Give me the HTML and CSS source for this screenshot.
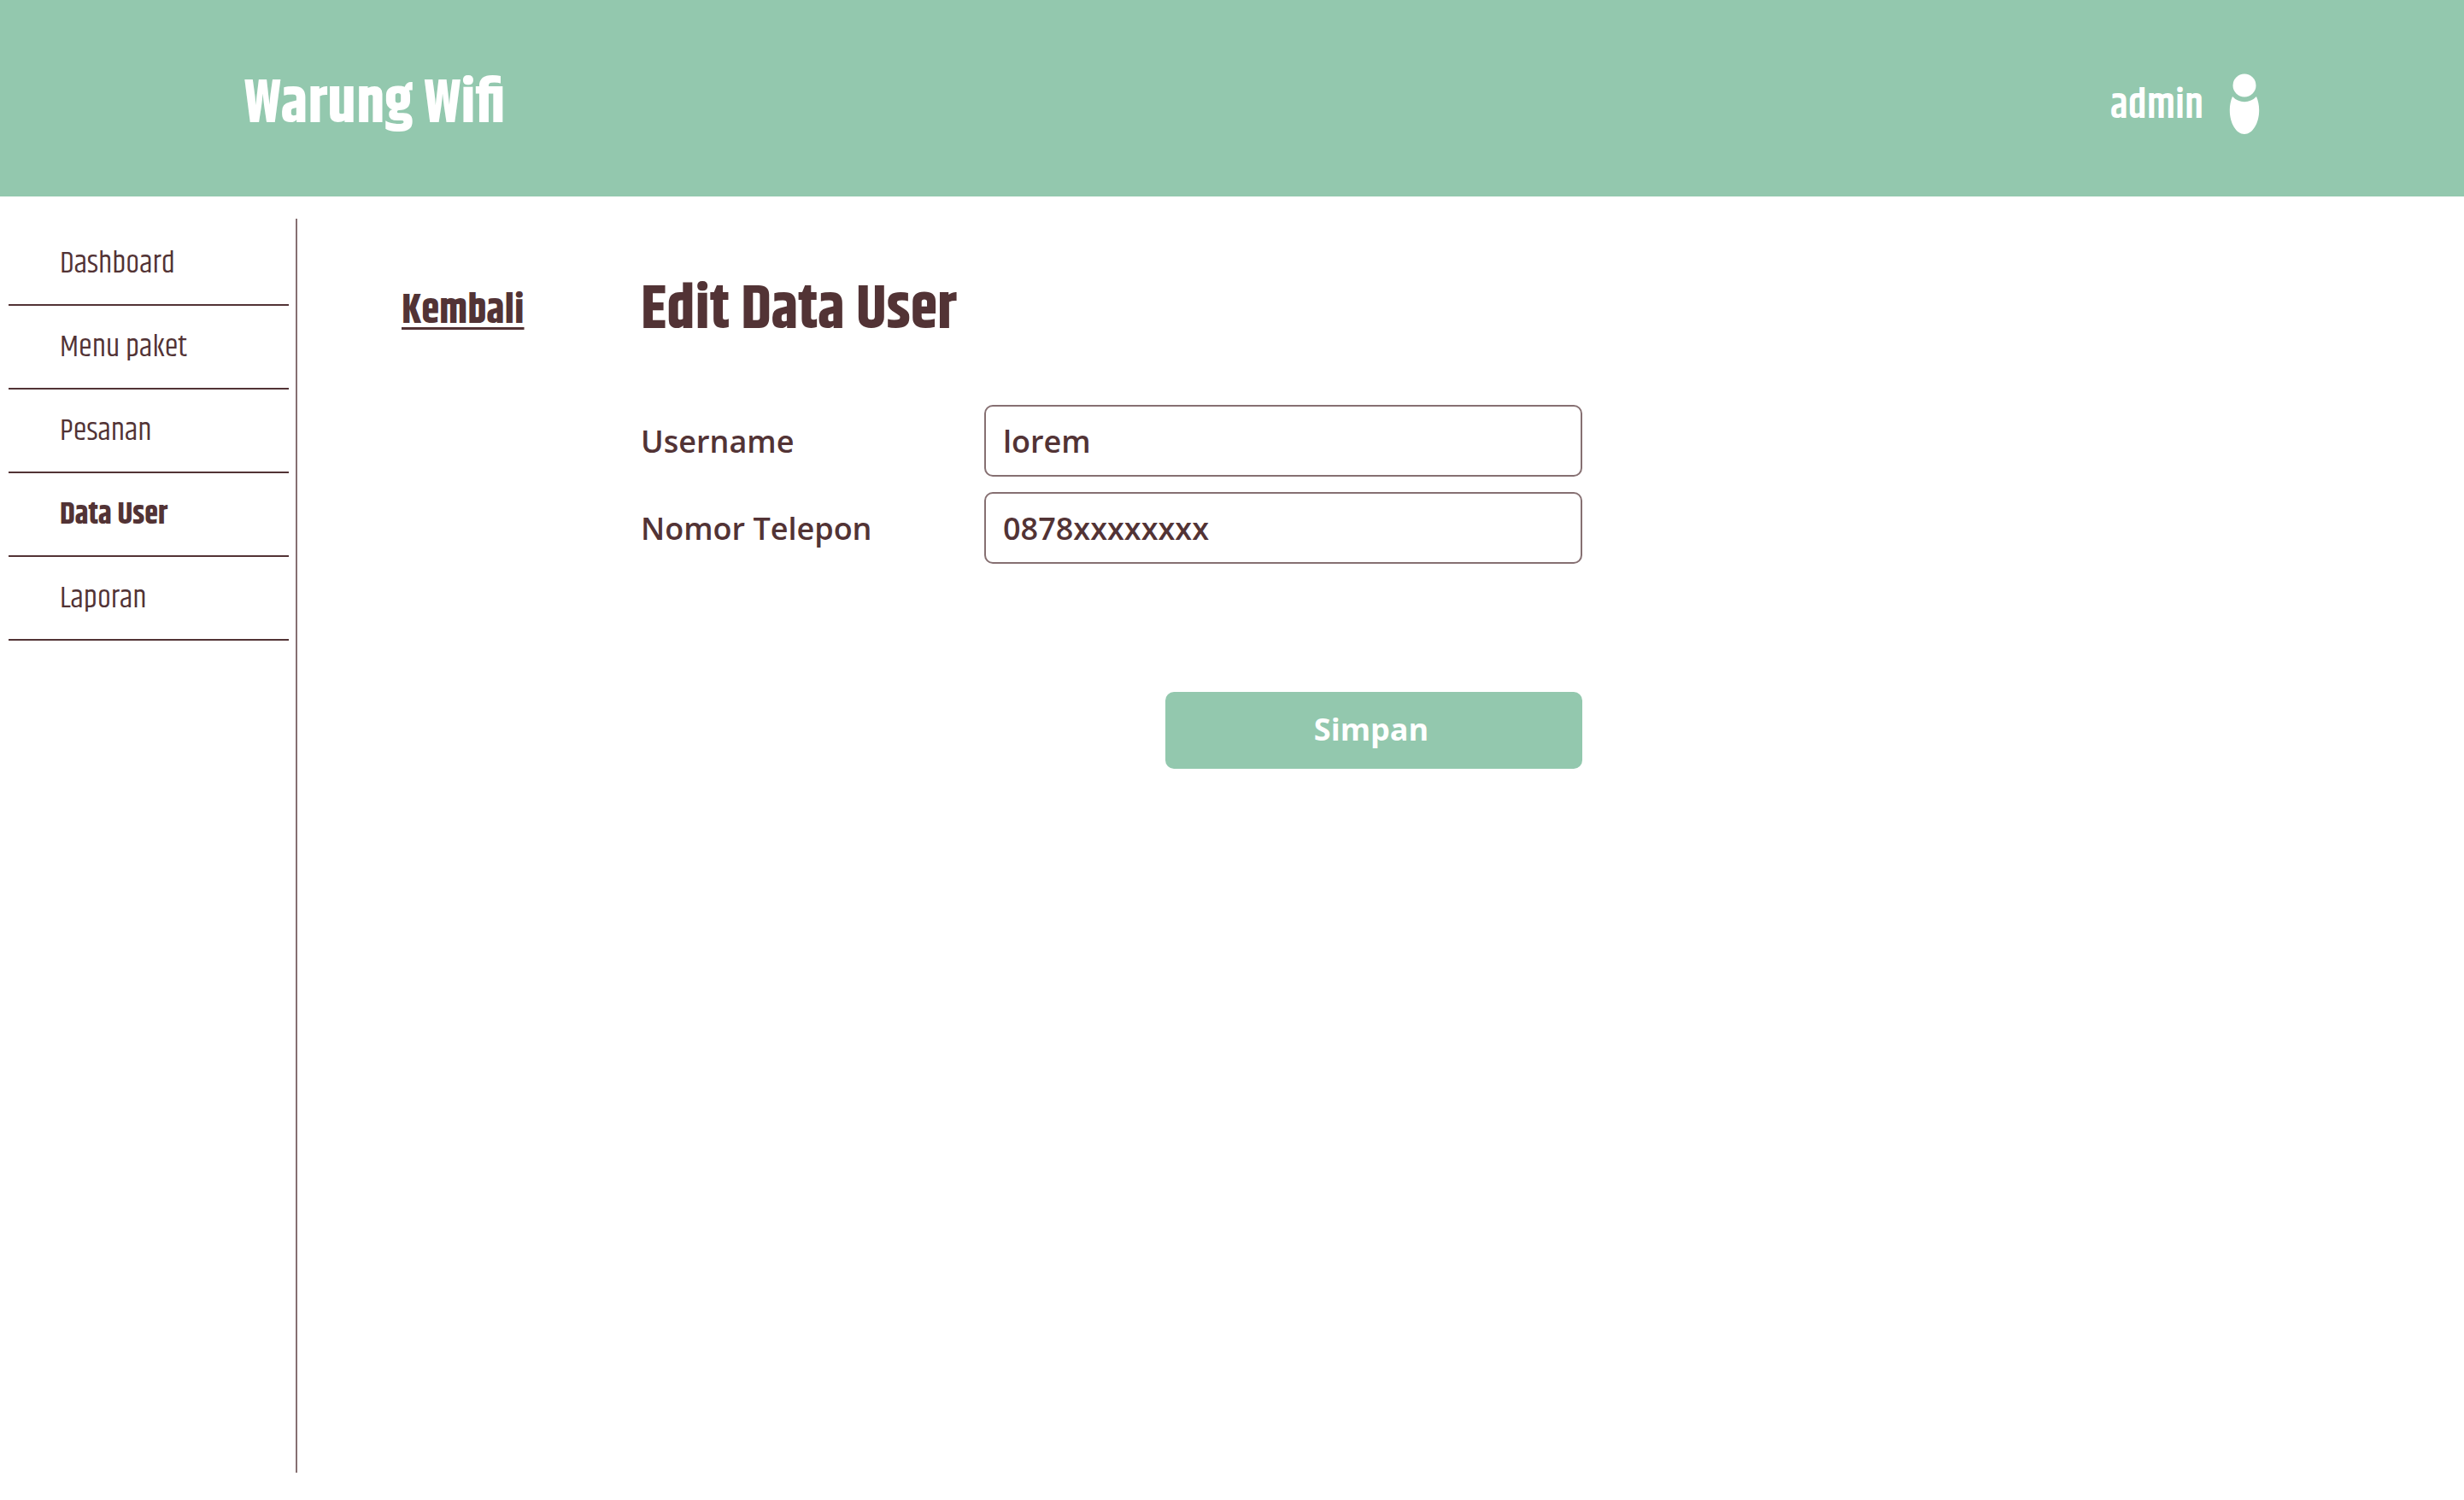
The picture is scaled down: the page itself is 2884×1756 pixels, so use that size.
FILE: index.html
```html
<!DOCTYPE html>
<html lang="id">
<head>
  <meta charset="utf-8">
  <meta name="viewport" content="width=device-width, initial-scale=1">
  <title>Edit Data User - Warung Wifi</title>
  <link rel="stylesheet" href="styles.css">
</head>
<body>
  <header class="topbar">
    <div class="brand">Warung Wifi</div>
    <div class="account">
      <span class="account-name">admin</span>
      <svg class="account-icon" viewBox="0 0 36 72" aria-hidden="true">
        <circle cx="18" cy="14" r="13.5"/>
        <path d="M4 27A19 19 0 0 0 32 27C34 31.500 35.200 37 35.200 43C35.200 58.500 27.500 71 18 71C8.500 71 .8 58.500 .8 43C.8 37 2 31.500 4 27Z"/>
      </svg>
    </div>
  </header>
  <div class="layout">
    <nav class="sidebar">
      <ul class="menu">
        <li><a class="menu-link" href="#">Dashboard</a></li>
        <li><a class="menu-link" href="#">Menu paket</a></li>
        <li><a class="menu-link" href="#">Pesanan</a></li>
        <li><a class="menu-link menu-link-active" href="#" aria-current="page">Data User</a></li>
        <li><a class="menu-link" href="#">Laporan</a></li>
      </ul>
    </nav>
    <main class="content">
      <a class="back" href="#">Kembali</a>
      <section class="panel">
        <h1 class="title">Edit Data User</h1>
        <form class="form">
          <div class="field">
            <label for="username">Username</label>
            <input class="input" id="username" type="text" value="lorem">
          </div>
          <div class="field">
            <label for="phone">Nomor Telepon</label>
            <input class="input" id="phone" type="text" value="0878xxxxxxxx">
          </div>
          <button class="save" type="submit">Simpan</button>
        </form>
      </section>
    </main>
  </div>
</body>
</html>
```

FILE: styles.css
```css
:root {
  --green: #93c8ae;
  --brown: #523335;
  --line: #867072;
  --display: "Khand", "Liberation Sans Narrow", sans-serif;
  --text: "Open Sans", "Noto Sans", sans-serif;
}

* {
  box-sizing: border-box;
}

body {
  display: flex;
  flex-direction: column;
  min-height: 100vh;
  margin: 0;
  background: #fff;
  color: var(--brown);
  font-family: var(--text);
  font-size: 36px;
}

.topbar {
  display: flex;
  align-items: center;
  justify-content: space-between;
  height: 230px;
  padding: 13px 239px 0 286px;
  background: var(--green);
  color: #fff;
  font-family: var(--display);
}

.brand {
  font-size: 72px;
  font-weight: 700;
}

.account {
  display: flex;
  align-items: center;
  gap: 30px;
}

.account-name {
  padding-top: 6px;
  font-size: 48px;
  font-weight: 600;
}

.account-icon {
  width: 36px;
  height: 72px;
  fill: currentColor;
}

.layout {
  display: flex;
  flex: 1;
}

.sidebar {
  flex: 0 0 348px;
  margin: 26px 0 32px;
  padding: 4px 8px 0 10px;
  border-right: 2px solid var(--line);
}

.menu {
  margin: 0;
  padding: 0;
  list-style: none;
}

.menu-link {
  display: block;
  padding: 25px 60px 23px;
  border-bottom: 2px solid var(--brown);
  color: inherit;
  font-family: var(--display);
  font-size: 36px;
  font-weight: 400;
  line-height: 48px;
  text-decoration: none;
}

.menu-link-active {
  font-weight: 700;
}

.content {
  display: flex;
  flex: 1;
  align-items: flex-start;
  padding: 85px 32px 0 122px;
}

.back {
  flex: 0 0 280px;
  color: inherit;
  font-family: var(--display);
  font-size: 48px;
  font-weight: 700;
  line-height: 100px;
  text-decoration-thickness: 3px;
  text-underline-offset: 5px;
}

.panel {
  flex: 1;
  max-width: 1102px;
}

.title {
  margin: 0 0 63px;
  font-family: var(--display);
  font-size: 72px;
  font-weight: 700;
  line-height: 96px;
}

.form {
  display: flex;
  flex-direction: column;
  gap: 18px;
}

.field {
  display: grid;
  grid-template-columns: 402px 1fr;
  align-items: center;
  font-weight: 600;
}

.input {
  width: 100%;
  height: 84px;
  padding: 0 20px;
  border: 2px solid var(--line);
  border-radius: 10px;
  background: #fff;
  color: inherit;
  font: inherit;
}

.save {
  align-self: flex-end;
  width: 488px;
  height: 90px;
  margin-top: 132px;
  padding: 0 6px 4px 0;
  border: 0;
  border-radius: 10px;
  background: var(--green);
  color: #fff;
  font: inherit;
  font-weight: 700;
}
```
